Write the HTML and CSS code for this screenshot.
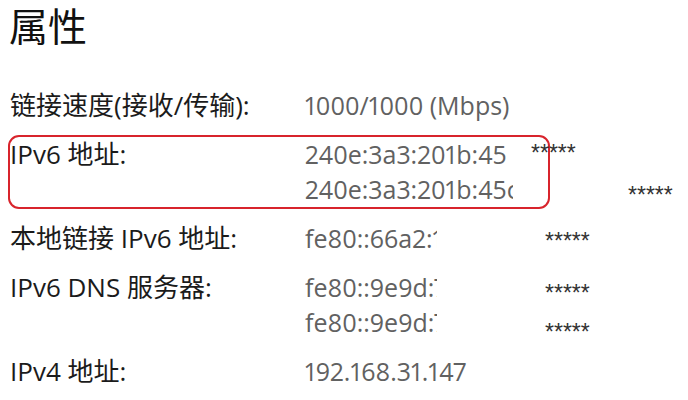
FILE: index.html
```html
<!DOCTYPE html>
<html lang="zh-CN">
<head>
    <meta charset="UTF-8">
    <meta name="viewport" content="width=device-width, initial-scale=1.0">
    <title>属性</title>
    <link rel="stylesheet" href="styles.css">
</head>
<body>
    <div class="sheet">
        <h1 class="title">属性</h1>

        <div class="props">
            <div class="row">
                <div class="label">链接速度(接收/传输):</div>
                <div class="value">
                    <div class="line">1000/1000 (Mbps)</div>
                </div>
            </div>
            <div class="row marked">
                <div class="label">IPv6 地址:</div>
                <div class="value">
                    <div class="line">240e:3a3:201b:45</div>
                    <div class="line"><span class="cut cut-wide">240e:3a3:201b:45c2</span></div>
                </div>
            </div>
            <div class="row">
                <div class="label">本地链接 IPv6 地址:</div>
                <div class="value">
                    <div class="line"><span class="cut">fe80::66a2:1</span></div>
                </div>
            </div>
            <div class="row">
                <div class="label">IPv6 DNS 服务器:</div>
                <div class="value">
                    <div class="line"><span class="cut">fe80::9e9d:7</span></div>
                    <div class="line"><span class="cut">fe80::9e9d:7</span></div>
                </div>
            </div>
            <div class="row">
                <div class="label">IPv4 地址:</div>
                <div class="value">
                    <div class="line">192.168.31.147</div>
                </div>
            </div>
        </div>

        <!-- hidden parts of the addresses -->
        <span class="mask mask-1">*****</span>
        <span class="mask mask-2">*****</span>
        <span class="mask mask-3">*****</span>
        <span class="mask mask-4">*****</span>
        <span class="mask mask-5">*****</span>
    </div>
</body>
</html>
```

FILE: styles.css
```css
body {
    margin: 0;
    background: #fff;
    font-family: 'Open Sans', 'Noto Sans CJK SC', sans-serif;
    font-feature-settings: "pnum";
}

.sheet {
    position: relative;
    width: 688px;
    height: 400px;
    overflow: hidden;
}

.title {
    margin: 0;
    padding: 0 0 0 9px;
    font-size: 39px;
    font-weight: normal;
    line-height: 52px;
    color: #111;
}

.props {
    display: flex;
    flex-direction: column;
    gap: 14px;
    margin-top: 36px;
    padding-left: 10px;
}

.row {
    display: grid;
    grid-template-columns: 295px 1fr;
    line-height: 35px;
}

.label {
    font-size: 26px;
    color: #1b1b1b;
    white-space: nowrap;
}

.value {
    font-size: 25px;
    color: #616161;
}

.line {
    white-space: nowrap;
}

.cut {
    display: inline-block;
    width: 132px;
    overflow: hidden;
    vertical-align: top;
}

.cut-wide {
    width: 208px;
}

.marked {
    position: relative;
}

.marked::before {
    content: '';
    position: absolute;
    left: -2px;
    top: -2px;
    bottom: -2px;
    width: 542px;
    border: 2px solid #d8242c;
    border-radius: 11px;
    box-sizing: border-box;
}

.mask {
    position: absolute;
    font-family: 'Liberation Sans', sans-serif;
    font-size: 23px;
    line-height: 23px;
    color: #333;
}

.mask-1 { left: 531px; top: 142px; }
.mask-2 { left: 628px; top: 184px; }
.mask-3 { left: 545px; top: 230px; }
.mask-4 { left: 545px; top: 282px; }
.mask-5 { left: 545px; top: 321px; }
```
